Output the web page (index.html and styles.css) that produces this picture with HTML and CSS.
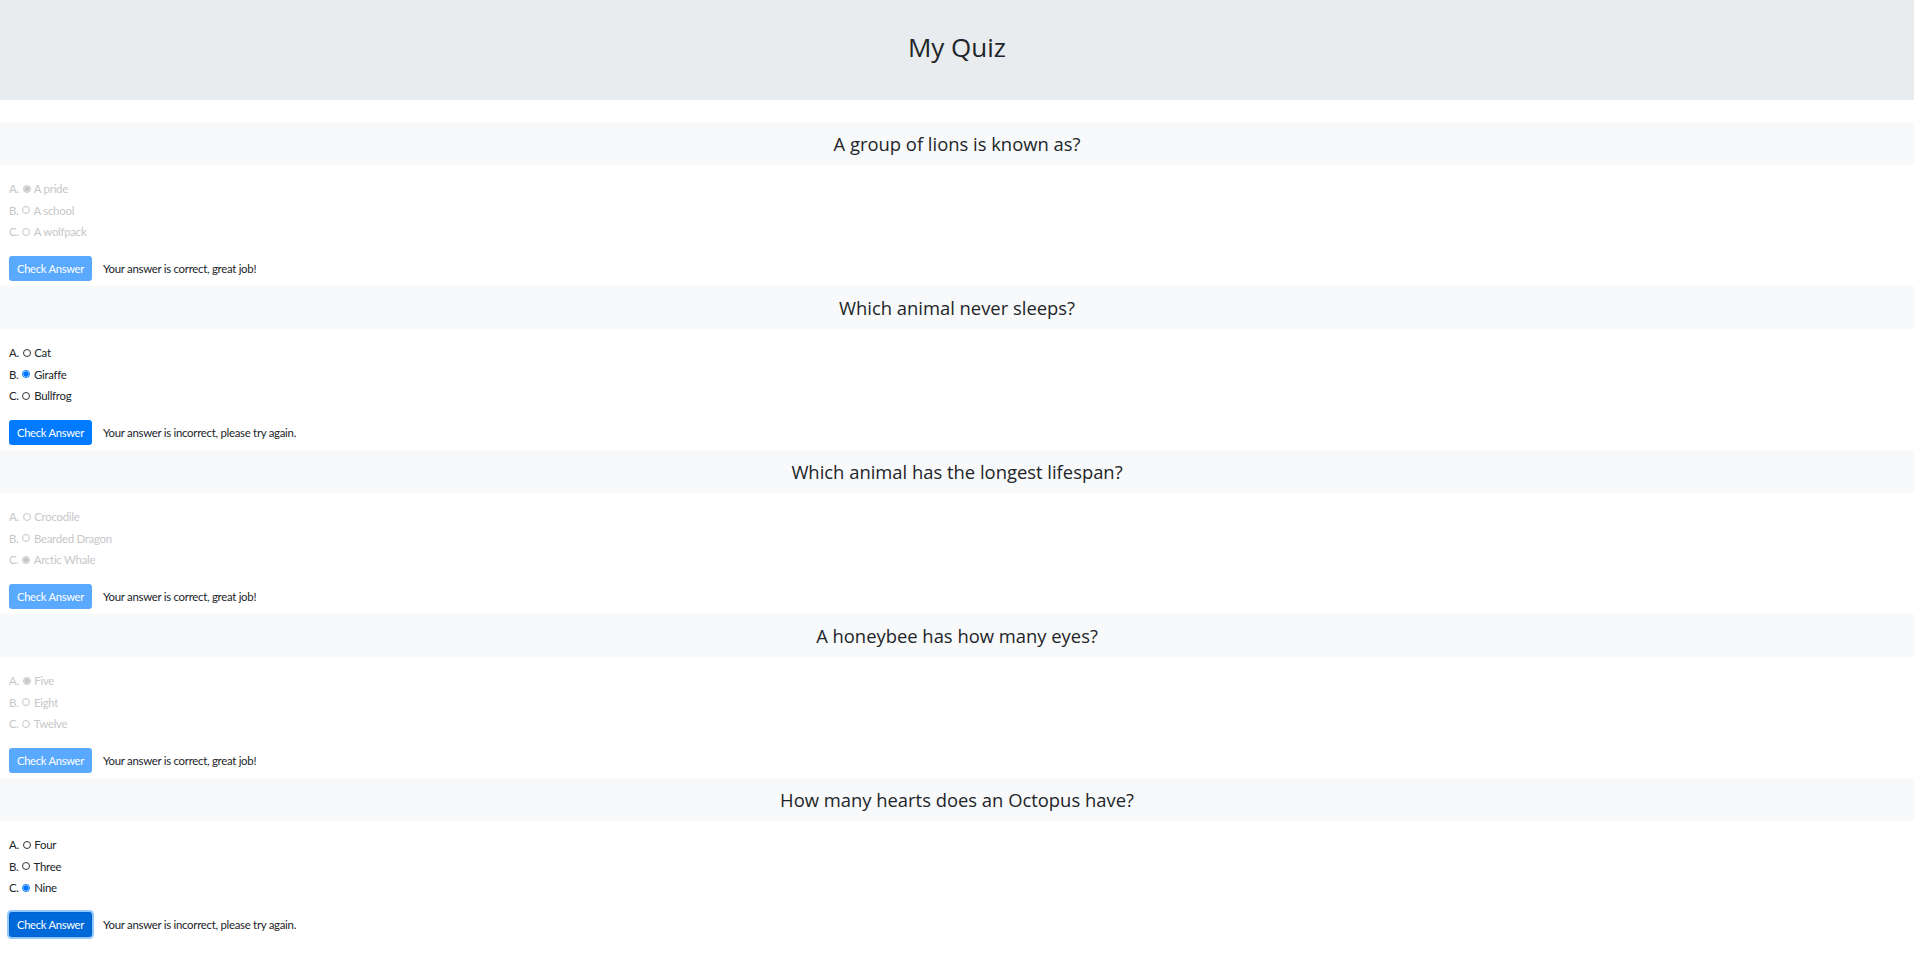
FILE: index.html
```html
<!DOCTYPE html>
<html>
<head>
<meta charset="utf-8">
<title>My Quiz</title>
<link rel="stylesheet" href="styles.css">
</head>
<body>
<header class="jumbo"><h1 class="title">My Quiz</h1></header>
<main class="quiz">
  <section class="question done">
    <h2 class="q-title">A group of lions is known as?</h2>
    <div class="options">
      <label class="opt">A. <input type="radio" name="q1" checked disabled> A pride</label>
      <label class="opt">B. <input type="radio" name="q1" disabled> A school</label>
      <label class="opt">C. <input type="radio" name="q1" disabled> A wolfpack</label>
    </div>
    <div class="actions"><button class="btn" disabled>Check Answer</button><span class="msg">Your answer is correct, great job!</span></div>
  </section>
  <section class="question">
    <h2 class="q-title">Which animal never sleeps?</h2>
    <div class="options">
      <label class="opt">A. <input type="radio" name="q2"> Cat</label>
      <label class="opt">B. <input type="radio" name="q2" checked> Giraffe</label>
      <label class="opt">C. <input type="radio" name="q2"> Bullfrog</label>
    </div>
    <div class="actions"><button class="btn">Check Answer</button><span class="msg">Your answer is incorrect, please try again.</span></div>
  </section>
  <section class="question done">
    <h2 class="q-title">Which animal has the longest lifespan?</h2>
    <div class="options">
      <label class="opt">A. <input type="radio" name="q3" disabled> Crocodile</label>
      <label class="opt">B. <input type="radio" name="q3" disabled> Bearded Dragon</label>
      <label class="opt">C. <input type="radio" name="q3" checked disabled> Arctic Whale</label>
    </div>
    <div class="actions"><button class="btn" disabled>Check Answer</button><span class="msg">Your answer is correct, great job!</span></div>
  </section>
  <section class="question done">
    <h2 class="q-title">A honeybee has how many eyes?</h2>
    <div class="options">
      <label class="opt">A. <input type="radio" name="q4" checked disabled> Five</label>
      <label class="opt">B. <input type="radio" name="q4" disabled> Eight</label>
      <label class="opt">C. <input type="radio" name="q4" disabled> Twelve</label>
    </div>
    <div class="actions"><button class="btn" disabled>Check Answer</button><span class="msg">Your answer is correct, great job!</span></div>
  </section>
  <section class="question">
    <h2 class="q-title">How many hearts does an Octopus have?</h2>
    <div class="options">
      <label class="opt">A. <input type="radio" name="q5"> Four</label>
      <label class="opt">B. <input type="radio" name="q5"> Three</label>
      <label class="opt">C. <input type="radio" name="q5" checked> Nine</label>
    </div>
    <div class="actions"><button class="btn focused">Check Answer</button><span class="msg">Your answer is incorrect, please try again.</span></div>
  </section>
</main>
</body>
</html>
```
FILE: styles.css
```css
* { box-sizing: border-box; }
html, body { margin: 0; padding: 0; }
body {
  font-family: "Open Sans", "Noto Sans", sans-serif;
  color: #212529;
  background: #fff;
}
.jumbo {
  height: 100px;
  background: #e9ecef;
  display: flex;
  align-items: center;
  justify-content: center;
  padding-bottom: 5px;
}
.title {
  margin: 0;
  font-size: 26px;
  font-weight: 500;
  line-height: 1.2;
}
.quiz { padding-top: 22px; }
.question { margin-bottom: 5px; }
.q-title {
  margin: 0;
  height: 43px;
  background: #f8f9fa;
  display: flex;
  align-items: center;
  justify-content: center;
  font-size: 18.4px;
  font-weight: 500;
}
.options {
  padding: 13px 9px 0;
  display: flex;
  flex-direction: column;
  font-family: Lato, "Open Sans", sans-serif;
  letter-spacing: -0.25px;
}
.opt {
  font-size: 11.4px;
  line-height: 21.5px;
  height: 21.5px;
  display: flex;
  align-items: center;
  white-space: pre;
}
.opt input {
  appearance: none;
  -webkit-appearance: none;
  width: 8px;
  height: 8px;
  margin: 0 1px;
  border: 1px solid #333;
  border-radius: 50%;
  background: #fff;
}
.opt input:checked {
  border-color: #0075ff;
  background: radial-gradient(circle, #0075ff 0 2.4px, #fff 2.8px 3px, #0075ff 3.2px);
}
.done .opt { color: #c6c7c8; }
.done .opt input { border-color: #c6c7c8; }
.done .opt input:checked {
  border-color: #c6c7c8;
  background: radial-gradient(circle, #c6c7c8 0 2.4px, #fff 2.8px 3px, #c6c7c8 3.2px);
}
.actions {
  padding: 13.5px 9px 0;
  display: flex;
  align-items: center;
  gap: 11px;
  font-family: Lato, "Open Sans", sans-serif;
  letter-spacing: -0.28px;
}
.btn {
  height: 25px;
  width: 83px;
  padding: 0;
  font-family: inherit;
  letter-spacing: inherit;
  font-size: 11.2px;
  color: #fff;
  background: #007bff;
  border: 1px solid #007bff;
  border-radius: 2.5px;
}
.btn:disabled { background: #59a9ff; border-color: #59a9ff; }
.btn.focused {
  background: #0069d9;
  border-color: #0062cc;
  box-shadow: 0 0 0 2px rgba(38, 143, 255, .5);
}
.msg { font-size: 11.4px; }
```
